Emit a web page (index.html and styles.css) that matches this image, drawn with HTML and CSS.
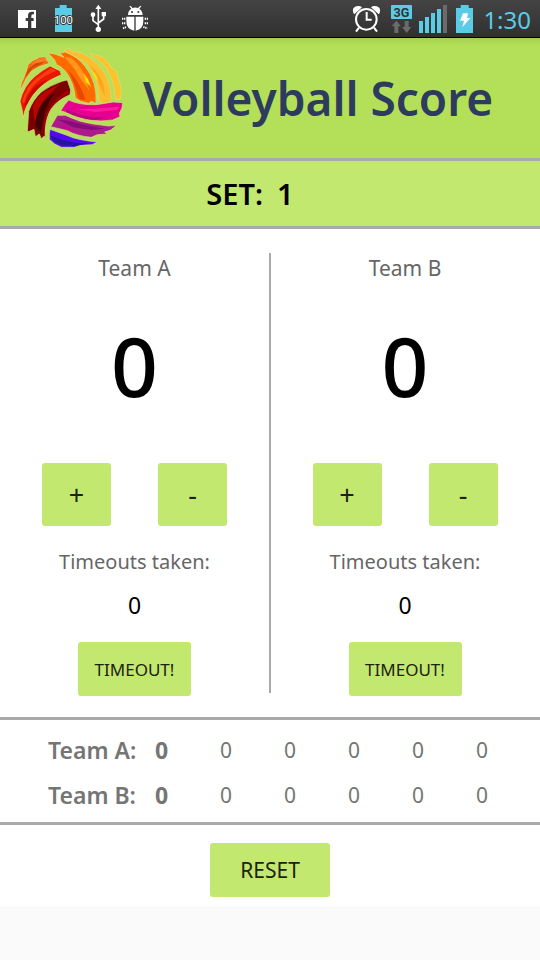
FILE: index.html
```html
<!DOCTYPE html>
<html lang="en">
<head>
<meta charset="utf-8">
<meta name="viewport" content="width=device-width, initial-scale=1">
<title>Volleyball Score</title>
<link rel="stylesheet" href="styles.css">
</head>
<body>
<div class="status">
  <svg class="status-icons" width="180" height="37" viewBox="0 0 540 111" aria-hidden="true">
    <path fill="#fff" d="M54 30h54v54H94V63h7v-9h-7v-6q0-5 5-5h3v-8h-7q-11 0-11 12v7h-7v9h7v21H54z"/>
    <path fill="#5bcbe6" d="M179 15h21v9h16v72h-51V24h14z"/>
    <text class="battery-text" x="190" y="71" text-anchor="middle">100</text>
    <g fill="none" stroke="#fff" stroke-width="5"><path d="M295 24v64M279 45v17l16 12M311 44v13l-16 12"/></g>
    <path fill="#fff" d="M295 14l9 13h-18zM305 36h13v13h-13z"/><circle cx="279" cy="44" r="7" fill="#fff"/><circle cx="295" cy="88" r="8" fill="#fff"/>
    <path fill="#fff" d="M384 45q0-13 10-19l-6-7 3-2 7 7q8-3 16 0l7-7 3 2-6 7q9 6 10 19zM379 50h24v42q-24-4-24-28zM407 50h23v14q0 24-23 28z"/>
    <path d="M366 56h10M366 70h10M369 85l10-4M434 56h10M434 70h10M430 81l12 4" stroke="#fff" stroke-width="6" stroke-dasharray="4 2"/>
    <circle cx="396" cy="36" r="3" fill="#383838"/><circle cx="415" cy="36" r="3" fill="#383838"/>
  </svg>
  <div class="status-right">
    <svg class="status-icons" width="135" height="37" viewBox="0 0 405 111" aria-hidden="true">
      <g fill="none" stroke="#fff" stroke-width="6"><circle cx="79" cy="58" r="31"/><path d="M80 36v23h15M57 83l-9 12M102 83l9 12"/></g>
      <path fill="#fff" d="M40 39q-5-16 9-20 11-3 17 3L43 43zM119 39q5-16-9-20-11-3-17 3l23 21z"/>
      <rect x="153" y="15" width="63" height="42" rx="2" fill="#5bcbe6"/>
      <text class="network-text" x="184" y="50" text-anchor="middle">3G</text>
      <path fill="#6b6b6b" d="M169 62l14 17h-8v20h-12V79h-8zM194 63h12v18h8l-14 18-14-18h8z"/>
      <path fill="#5bcbe6" d="M237 63h12v36h-12zM255 51h12v48h-12zM273 39h12v60h-12zM291 27h12v72h-12zM362 15h24v9h13v75h-51V24h14z"/>
      <path fill="#6b6b6b" d="M309 15h12v84h-12z"/>
      <path fill="#fff" d="M369 40h15l-3 14h10l-24 28 5-20h-12z"/>
    </svg>
    <span class="clock">1:30</span>
  </div>
</div>
<header class="header">
  <svg class="logo" width="130" height="120" viewBox="0 -6 390 360" role="img" aria-label="Volleyball">
    <g stroke="#dcdf7a" stroke-width="2" stroke-linejoin="round">
    <path fill="#f26a10" d="M30 153Q32 130 40 116L50 90 54 74 68 62 88 52 106 50 110 60 118 70Q86 78 64 94L48 116Z"/>
    <path fill="#e81800" d="M40 232L36 208 30 184Q40 138 76 108 98 90 120 78L136 86 150 92 154 104Q114 120 90 142 66 164 52 194L44 214Z"/>
    <path fill="#7c0000" d="M106 302L103 288 94 296 88 282 76 290 72 268 62 272 52 276 56 214Q68 180 94 156 120 136 156 124L172 120 182 150 180 164Q142 180 124 206 108 230 105 266Z"/>
    <path fill="#ff6a00" d="M114 39L134 42 162 52 150 40 166 36Q204 50 226 80 262 126 258 190L244 184 236 190 212 184 196 174Q192 128 168 96 154 78 140 74L134 60Z"/>
    <path fill="#fcbd2e" d="M162 32L178 24 184 34 214 38Q262 62 286 102 302 132 304 174L298 190 280 190 266 184Q266 124 244 90 226 60 190 48Z"/>
    <path fill="#fdc32c" d="M240 40L260 46 280 52Q296 64 304 84L320 94 324 114 332 138 334 160 330 178 316 178Q314 126 290 88 270 58 248 50Z"/>
    <path fill="#e5008f" d="M152 212L164 194 176 180Q208 196 260 194L310 186 338 188 336 204 328 220 330 230 308 240Q240 250 188 224Z"/>
    <path fill="#ac1b8c" d="M122 260L142 226 166 226Q206 246 250 252L296 258 320 256 302 270 284 276 292 282 262 284 244 292Q200 288 172 272Z"/>
    <path fill="#5208f5" d="M118 280L120 268Q154 280 176 288 202 300 262 306L246 314 210 316 194 322 154 322 134 312 118 298Z"/>
    </g>
    <path fill="#c94b08" d="M46 112L54 88 78 70 106 62 94 72 68 84 56 98Z"/>
    <path fill="#ff7d1e" d="M62 72L82 58 104 54 110 62 86 68Z"/>
    <path fill="#c20a00" d="M42 200Q52 160 78 138L112 118 84 146Q62 168 52 192Z"/>
    <path fill="#ff3a10" d="M36 186Q46 144 78 116L122 84 140 92Q98 106 72 136 50 160 42 190Z"/>
    <path fill="#b80500" d="M68 200Q80 170 106 154L150 132 122 160Q94 184 86 216L74 244Z"/>
    <path fill="#a80000" d="M100 274Q98 228 126 192L170 150 178 160Q136 178 120 208 106 236 104 274Z"/>
    <path fill="#420000" d="M76 258Q78 208 102 184L138 154Q112 190 104 220L92 278Z"/>
    <path fill="#ff981c" d="M164 52L184 54Q212 78 224 108L238 150Q214 124 194 88Z"/>
    <path fill="#e94600" d="M174 90Q210 124 226 180L206 176Q198 138 174 90Z"/>
    <path fill="#ffe000" d="M220 98L234 118 244 142 228 126ZM242 82L260 98 268 128 254 112Z"/>
    <path fill="#ffa51f" d="M236 76Q266 94 280 132L286 170Q266 138 260 108Z"/>
    <path fill="#ff1a9c" d="M198 208L252 206 328 200 322 210 256 216Z"/>
    <path fill="#bd0080" d="M168 208Q210 228 256 232L296 232 254 240Q204 236 168 216Z"/>
    <path fill="#850c7a" d="M142 238L174 242 230 256 284 266 244 270 190 262Z"/>
    <path fill="#d4008c" d="M144 260L168 258 186 270 198 278 172 268Z"/>
    <path fill="#23169a" d="M122 286L150 298 194 308 238 310 196 318 154 316 130 304Z"/>
  </svg>
  <h1>Volleyball Score</h1>
</header>
<section class="set"><span class="set-label">SET:</span><span>1</span></section>
<main class="teams">
  <section class="team">
    <h2>Team A</h2>
    <div class="score">0</div>
    <div class="controls"><button aria-label="Add point to Team A">+</button><button aria-label="Remove point from Team A">-</button></div>
    <p class="taken">Timeouts taken:</p>
    <p class="count">0</p>
    <button class="timeout">TIMEOUT!</button>
  </section>
  <section class="team">
    <h2>Team B</h2>
    <div class="score">0</div>
    <div class="controls"><button aria-label="Add point to Team B">+</button><button aria-label="Remove point from Team B">-</button></div>
    <p class="taken">Timeouts taken:</p>
    <p class="count">0</p>
    <button class="timeout">TIMEOUT!</button>
  </section>
</main>
<section class="history">
  <table>
    <tbody>
      <tr><th scope="row">Team A:</th><td class="current">0</td><td>0</td><td>0</td><td>0</td><td>0</td><td>0</td></tr>
      <tr><th scope="row">Team B:</th><td class="current">0</td><td>0</td><td>0</td><td>0</td><td>0</td><td>0</td></tr>
    </tbody>
  </table>
</section>
<footer class="footer"><button class="reset">RESET</button></footer>
</body>
</html>
```
FILE: styles.css
```css
* { box-sizing: border-box; }
body {
  margin: 0;
  background: #fafafa;
  font-family: "Noto Sans", "Open Sans", sans-serif;
  color: #000;
}
h1, h2, p { margin: 0; font-weight: 400; }
button {
  border: 0;
  padding: 0;
  border-radius: 3px;
  background: #c3e870;
  color: #1d220f;
  font: inherit;
}
.status {
  display: flex;
  justify-content: space-between;
  height: 38px;
  border-bottom: 1px solid #000;
  background: linear-gradient(#444, #303030);
}
.status-icons { display: block; flex: none; }
.battery-text { font: 400 34px Roboto, sans-serif; fill: #fff; stroke: #333; stroke-width: 6px; paint-order: stroke; }
.network-text { font: 700 38px Roboto, sans-serif; fill: #333; }
.status-right { display: flex; padding-right: 9px; gap: 8px; }
.clock { color: #5bcbe6; font-size: 24px; line-height: 39px; }
.header {
  display: flex;
  align-items: center;
  height: 123px;
  padding-left: 10px;
  border-bottom: 3px solid #a9a9a9;
  background: linear-gradient(#a4d04e, #b3e058 8px);
}
.logo { flex: none; }
.header h1 { padding-left: 3px; color: #2d3b5e; font-size: 46px; font-weight: 600; line-height: 60px; white-space: nowrap; }
.set {
  display: grid;
  grid-template-columns: 1fr 1fr;
  column-gap: 14px;
  height: 68px;
  border-bottom: 3px solid #a9a9a9;
  background: #c3e870;
  font-size: 29px;
  font-weight: 600;
  line-height: 65px;
}
.set-label { text-align: right; }
.teams {
  display: grid;
  grid-template-columns: 1fr 1fr;
  padding: 24px 0;
  background: #fff;
}
.team { display: flex; flex-direction: column; align-items: center; height: 440px; }
.team > * { flex: none; }
.team:first-child { margin-right: -1px; border-right: 2px solid #a9a9a9; }
.team h2 { color: #666; font-size: 21px; line-height: 30px; }
.score { margin-top: 22px; font-size: 82px; font-weight: 500; line-height: 120px; }
.controls { display: flex; gap: 47px; margin-top: 38px; }
.controls button { width: 69px; height: 63px; font-size: 27px; }
.taken { margin-top: 21px; color: #666; font-size: 20px; line-height: 30px; }
.count { margin-top: 13px; font-size: 23px; line-height: 30px; }
.timeout { width: 113px; height: 54px; margin-top: 22px; font-size: 17px; }
.history {
  padding: 7px 26px 5px 48px;
  border-top: 3px solid #a9a9a9;
  border-bottom: 3px solid #a9a9a9;
  background: #fff;
}
table { width: 100%; table-layout: fixed; border-collapse: collapse; color: #757575; }
th, td { height: 45px; padding: 0; text-align: center; font-size: 21px; }
th { width: 98px; text-align: left; font-size: 23px; font-weight: 600; white-space: nowrap; }
.current { width: 48px; padding-left: 9px; text-align: left; font-size: 23px; font-weight: 700; }
.footer { display: flex; justify-content: center; padding: 18px 0 9px; background: #fff; }
.reset { width: 120px; height: 54px; font-size: 21px; }
```
